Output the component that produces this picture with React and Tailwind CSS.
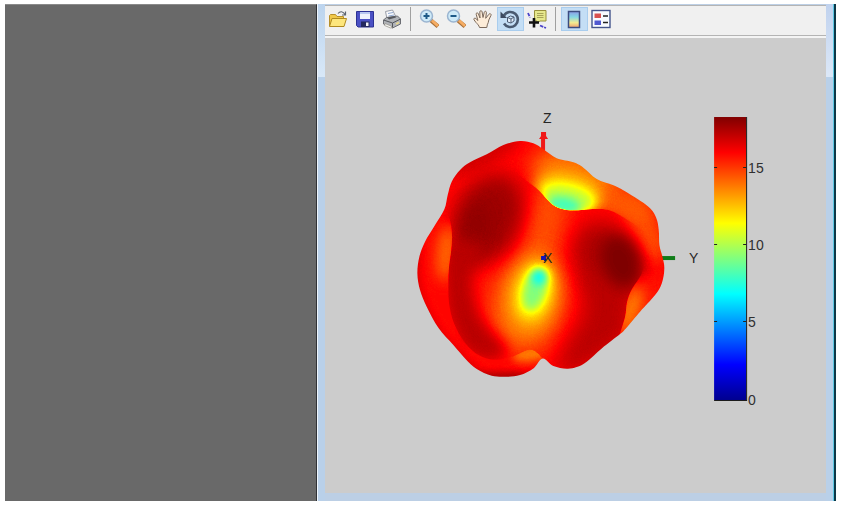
import React from 'react';

// Closed or open Catmull-Rom curve through a list of points
function smooth(points, closed = true) {
  const n = points.length;
  const at = (i) => (closed ? points[(i + n) % n] : points[Math.max(0, Math.min(n - 1, i))]);
  let d = `M${points[0][0]} ${points[0][1]}`;
  for (let i = 0; i < (closed ? n : n - 1); i++) {
    const [a, b, c, e] = [at(i - 1), at(i), at(i + 1), at(i + 2)];
    d += `C${b[0] + (c[0] - a[0]) / 6} ${b[1] + (c[1] - a[1]) / 6} ${c[0] - (e[0] - b[0]) / 6} ${c[1] - (e[1] - b[1]) / 6} ${c[0]} ${c[1]}`;
  }
  return closed ? d + 'Z' : d;
}

const outline = [
  [330, 33], [370, 40], [400, 58], [440, 85], [490, 97], [520, 113], [560, 147], [610, 166], [650, 187],
  [715, 230], [738, 262], [746, 300], [748, 345], [757, 380], [763, 415], [755, 460], [735, 495], [690, 545],
  [650, 592], [630, 612], [575, 655], [530, 695], [500, 711], [470, 716], [430, 708], [398, 685], [370, 715],
  [330, 735], [290, 740], [245, 737], [200, 717], [165, 685], [130, 645], [85, 593], [50, 530], [30, 480],
  [22, 430], [28, 380], [45, 335], [75, 285], [103, 238], [113, 195], [125, 155], [150, 120], [180, 97],
  [230, 73], [280, 45],
];
const leftRidge = [
  [104, 215], [121, 275], [126, 320], [123, 365], [117, 410], [115, 460], [117, 520], [132, 580], [165, 638],
  [205, 675], [250, 689], [300, 682], [355, 659], [380, 667], [400, 688],
];
const rightRidge = [[702, 385], [695, 430], [665, 478], [651, 515], [645, 560], [628, 616]];
const topRidge = [[280, 95], [340, 145], [385, 180], [410, 207], [435, 229], [470, 240], [520, 240], [552, 237], [610, 245], [700, 300]];

const gray = (v) => {
  const g = Math.round(v * 255);
  return `rgb(${g},${g},${g})`;
};

// One soft spot of the scalar field, v is the normalised value
function Spot({ x, y, rx, ry, r = 0, v, o = 1, blur = 'b20' }) {
  return (
    <ellipse cx={x} cy={y} rx={rx} ry={ry} transform={`rotate(${r} ${x} ${y})`} fill={gray(v)} opacity={o} filter={`url(#${blur})`} />
  );
}

const ticks = [
  { label: '15', y: 168 },
  { label: '10', y: 245 },
  { label: '5', y: 322 },
  { label: '0', y: 400 },
];

function Surface() {
  return (
    <g transform="translate(410 130) scale(0.33333)">
      <g clipPath="url(#body)">
        <g filter="url(#jet)">
          <rect width="780" height="765" fill={gray(0.87)} />
          {/* front lobes */}
          <Spot x={400} y={300} rx={60} ry={160} r={14} v={0.8} blur="b30" />
          <Spot x={700} y={290} rx={45} ry={110} r={-25} v={0.8} blur="b20" />
          <Spot x={345} y={530} rx={100} ry={140} r={4} v={0.76} blur="b40" />
          <Spot x={220} y={75} rx={130} ry={30} r={-27} v={0.92} blur="b20" />
          <Spot x={235} y={265} rx={100} ry={140} r={22} v={0.97} blur="b30" />
          <Spot x={195} y={295} rx={40} ry={90} r={10} v={0.985} blur="b30" />
          <path d={smooth([[115, 350], [220, 350], [185, 450], [210, 560], [290, 660], [240, 690], [160, 650], [110, 520]])} fill={gray(0.94)} filter="url(#b20)" />
          <Spot x={590} y={390} rx={95} ry={120} r={-25} v={0.955} blur="b30" />
          <path d={smooth([[540, 420], [680, 420], [660, 520], [650, 620], [500, 725], [440, 730], [470, 640], [520, 550]])} fill={gray(0.94)} filter="url(#b30)" />
          <Spot x={632} y={395} rx={58} ry={80} r={-20} v={1} blur="b20" />
          {/* front dip */}
          <Spot x={372} y={490} rx={72} ry={115} r={12} v={0.7} blur="b30" />
          <Spot x={372} y={485} rx={46} ry={80} r={16} v={0.6} blur="b20" />
          <Spot x={374} y={478} rx={30} ry={62} r={16} v={0.5} blur="b12" />
          <Spot x={387} y={442} rx={20} ry={22} r={20} v={0.36} blur="b12" />
          {/* upper dip */}
          <g clipPath="url(#top)">
            <Spot x={500} y={145} rx={140} ry={75} r={20} v={0.75} blur="b30" />
            <Spot x={640} y={225} rx={90} ry={40} r={25} v={0.79} blur="b20" />
            <Spot x={475} y={190} rx={100} ry={48} r={14} v={0.64} blur="b20" />
            <Spot x={475} y={205} rx={78} ry={36} r={14} v={0.57} blur="b12" />
            <Spot x={462} y={225} rx={50} ry={25} r={10} v={0.44} blur="b12" />
          </g>
          {/* lobe behind, left and bottom */}
          <g clipPath="url(#left)">
            <path d="M0 275H160V765H0zM100 640H420V765H100z" fill={gray(0.87)} filter="url(#b12)" />
            <path d={smooth([[20, 340], [20, 480], [90, 620], [220, 740], [330, 745]], false)} fill="none" stroke={gray(0.91)} strokeWidth="30" filter="url(#b12)" />
            <Spot x={285} y={748} rx={120} ry={20} v={0.96} blur="b12" />
            <Spot x={108} y={370} rx={28} ry={85} r={5} v={0.77} blur="b20" />
            <Spot x={365} y={670} rx={60} ry={24} r={-10} v={0.75} blur="b12" />
          </g>
          {/* lobe behind, right */}
          <g clipPath="url(#right)">
            <path d="M600 440H780V700H600z" fill={gray(0.86)} filter="url(#b20)" />
            <Spot x={662} y={540} rx={26} ry={75} r={20} v={0.74} blur="b20" />
          </g>
        </g>
      </g>
    </g>
  );
}

function Plot() {
  return (
    <svg viewBox="325 38 501 455" className="block w-full bg-[#cccccc]" role="img" aria-label="Radiation pattern">
      <defs>
        <filter id="jet" x="0" y="0" width="100%" height="100%" colorInterpolationFilters="sRGB">
          <feComponentTransfer>
            <feFuncR type="table" tableValues="0 0 0 0 0.5 1 1 1 0.5" />
            <feFuncG type="table" tableValues="0 0 0.5 1 1 1 0.5 0 0" />
            <feFuncB type="table" tableValues="0.5 1 1 1 0.5 0 0 0 0" />
          </feComponentTransfer>
        </filter>
        {[12, 20, 30, 40].map((s) => (
          <filter key={s} id={`b${s}`} x="-300%" y="-300%" width="700%" height="700%" colorInterpolationFilters="sRGB">
            <feGaussianBlur stdDeviation={s} />
          </filter>
        ))}
        <clipPath id="body"><path d={smooth(outline)} /></clipPath>
        <clipPath id="top"><path d={smooth(topRidge, false) + 'L780 300V0H280Z'} /></clipPath>
        <clipPath id="left"><path d={smooth(leftRidge, false) + 'V765H0V215Z'} /></clipPath>
        <clipPath id="right"><path d={smooth(rightRidge, false) + 'H780V385Z'} /></clipPath>
        <linearGradient id="scale" x1="0" y1="0" x2="0" y2="1">
          <stop offset="0" stopColor="#800000" />
          <stop offset="0.125" stopColor="#ff0000" />
          <stop offset="0.375" stopColor="#ffff00" />
          <stop offset="0.625" stopColor="#00ffff" />
          <stop offset="0.875" stopColor="#0000ff" />
          <stop offset="1" stopColor="#00008f" />
        </linearGradient>
      </defs>

      {/* axes */}
      <path d="M543 152V133" stroke="#f01818" strokeWidth="4" />
      <path d="M541 132h5v4l2 3h-9l2-3z" fill="#f01818" />
      <path d="M660 258h15" stroke="#107c18" strokeWidth="4" />
      <Surface />
      <path d="M541 256h3v-1h2v6h-2v-1h-3z" fill="#1414b4" />

      <g fontFamily="'Liberation Sans', Arial, sans-serif" fontSize="14" fill="#262626">
        <text x="543" y="123">Z</text>
        <text x="689" y="263">Y</text>
        <text x="543" y="263">X</text>
      </g>

      {/* colour scale */}
      <rect x="714" y="117" width="32" height="283" fill="url(#scale)" />
      <path d="M746.5 117V400.500H714" fill="none" stroke="#1c1c1c" />
      {ticks.map((t) => (
        <g key={t.label}>
          {t.label !== '0' && <path d={`M714 ${t.y - 0.5}h3M743 ${t.y - 0.5}h3`} stroke="#222" />}
          <text x="748" y={t.y + 5} fontFamily="'Liberation Sans', Arial, sans-serif" fontSize="14" fill="#303030">{t.label}</text>
        </g>
      ))}
    </svg>
  );
}

const icons = {
  open: (
    <>
      <path d="M1.500 17V6.500l1-1h5l1.500 2h6.500V17z" fill="#f0c84a" stroke="#b8902a" />
      <path d="M1.500 17.500L4 9.500h14.500l-2.500 8z" fill="#fde67c" stroke="#b08a20" />
      <path d="M10 4.500c2-2.500 5-2.500 7 1M17.500 2.500v3.500h-3.500" fill="none" stroke="#5c6470" strokeWidth="1.200" />
    </>
  ),
  save: (
    <>
      <path d="M1.500 2.500h17v15.500H3l-1.500-1.500z" fill="#4a50c4" stroke="#2c3294" />
      <path d="M5 3h10v7H5z" fill="#eef2fc" />
      <path d="M5 3h10v2H5z" fill="#b8c8f0" />
      <path d="M6 12.500h8.500V18H6z" fill="#23285e" />
      <path d="M11 13.500h2.500V17H11z" fill="#f4f4fa" />
    </>
  ),
  print: (
    <>
      <path d="M5 10L3.500 2.500l7-1.500 4 8z" fill="#f8f9fc" stroke="#9a9ea8" />
      <path d="M6 4.500l5-1M6.500 7l5.500-1" stroke="#8fa8d0" />
      <path d="M1.500 11l3-2.500 11-1.500 3 3v5l-8 4-9-4z" fill="#b0b3b8" stroke="#6c6e74" />
      <path d="M1.500 11l9 3 8-4M10.500 14v5" fill="none" stroke="#54575c" />
      <path d="M5 8.500l2 2 7-2-1-1.500z" fill="#55585e" />
      <path d="M3 14.500l6 2.500 1.500 1.500-2 .5-6-2.500z" fill="#f2f2ee" stroke="#88857c" strokeWidth=".6" />
      <path d="M14 15l3-1.500" stroke="#e8d890" strokeWidth="1.500" />
    </>
  ),
  zoomIn: (
    <>
      <path d="M12 11.500l7 6" stroke="#a8713c" strokeWidth="4.200" />
      <path d="M13 11.500l6 5.500" stroke="#f6ac62" strokeWidth="2.800" />
      <circle cx="7.500" cy="7" r="6" fill="#cfeaf8" stroke="#9ab4d0" strokeWidth="1.500" />
      <path d="M4.500 7h6M7.500 4v6" stroke="#1f5a88" strokeWidth="2" />
    </>
  ),
  zoomOut: (
    <>
      <path d="M12 11.500l7 6" stroke="#a8713c" strokeWidth="4.200" />
      <path d="M13 11.500l6 5.500" stroke="#f6ac62" strokeWidth="2.800" />
      <circle cx="7.500" cy="7" r="6" fill="#cfeaf8" stroke="#9ab4d0" strokeWidth="1.500" />
      <path d="M4.500 7h6" stroke="#1f5a88" strokeWidth="2" />
    </>
  ),
  pan: (
    <path
      d="M6.500 18.500c-.5-2-2-3.500-3.500-5L1 10.800c-.7-1.300.8-2.300 1.900-1.200l2 1.900L3.200 5.300c-.3-1.600 1.500-2.100 2.100-.6L7 9 6.800 3c0-1.700 2-1.800 2.300-.2L10 8.500l1.300-5.300c.5-1.500 2.300-1.100 2.100.5l-.7 5.600 3.200-4c.9-1.300 2.700-.4 2.100 1L15.800 11c-.5 2-.6 3.500-1.500 4.800l-.5 2.700z"
      fill="#fdecd8"
      stroke="#7c6a5c"
    />
  ),
  rotate: (
    <>
      <path d="M4 6.500a7.500 7.500 0 1 1 0 8" fill="none" stroke="#4a5a70" strokeWidth="2.600" />
      <path d="M.5 2.500v6.500h6.500z" fill="#3c4a60" />
      <path d="M7.500 8.500l3-1.500 3.500 1v4l-3 2-3.500-1zM7.500 8.500l3.500 1.500 3-2M11 10v4" fill="#e4eefa" stroke="#4c5c74" />
    </>
  ),
  cursor: (
    <>
      <path d="M1 4l2 4.500M13 16.500l6 2.500" fill="none" stroke="#4a42c8" strokeWidth="1.800" strokeDasharray="3.500 1" />
      <path d="M7.500 1.500h11.500v10.500H13l-3 2v-2H7.500z" fill="#e6e88c" stroke="#98903c" />
      <path d="M10 4.500h6.500M10 6.500h6.500M10 8.500h6.500" stroke="#a8a458" />
      <path d="M2 13.500h10M7 9v9.500" stroke="#111" strokeWidth="2.600" />
    </>
  ),
  colorbar: (
    <>
      <rect x="4.500" y="2.500" width="11" height="16" fill="url(#mini)" stroke="#3c4c80" strokeWidth="1.500" />
      <defs>
        <linearGradient id="mini" x1="0" y1="0" x2="0" y2="1">
          <stop offset="0" stopColor="#8c9ce8" />
          <stop offset=".35" stopColor="#84d8e4" />
          <stop offset=".7" stopColor="#f4ec90" />
          <stop offset="1" stopColor="#f0a070" />
        </linearGradient>
      </defs>
    </>
  ),
  legend: (
    <>
      <rect x="1" y="1.500" width="18" height="17" fill="#f8faff" stroke="#44548c" strokeWidth="1.400" />
      <path d="M3.500 4.500h6.500V9H3.500z" fill="#d85050" />
      <path d="M3.500 11.500h6.500V16H3.500z" fill="#5058d0" />
      <path d="M12 7h5M12 13.500h5" stroke="#222" strokeWidth="1.500" />
    </>
  ),
};

const tools = [
  { icon: 'open', name: 'Open File' },
  { icon: 'save', name: 'Save Figure' },
  { icon: 'print', name: 'Print Figure' },
  null,
  { icon: 'zoomIn', name: 'Zoom In' },
  { icon: 'zoomOut', name: 'Zoom Out' },
  { icon: 'pan', name: 'Pan' },
  { icon: 'rotate', name: 'Rotate 3D', active: true },
  { icon: 'cursor', name: 'Data Cursor' },
  null,
  { icon: 'colorbar', name: 'Insert Colorbar', active: true },
  { icon: 'legend', name: 'Insert Legend' },
];

function Toolbar() {
  return (
    <div className="flex items-center border-y border-[#b4b4b4] bg-[#f0f0f0] pt-px pb-1">
      {tools.map((tool, idx) =>
        tool ? (
          <button
            key={idx}
            aria-label={tool.name}
            aria-pressed={tool.active}
            className={`flex h-6 w-[27px] items-center justify-center ${tool.active ? 'border border-[#a9cdee] bg-[#c4def5]' : ''}`}
          >
            <svg viewBox="0 0 20 20" className="size-5 shrink-0" aria-hidden="true">{icons[tool.icon]}</svg>
          </button>
        ) : (
          <div key={idx} className="flex w-[10px] justify-center">
            <div className="h-6 w-px bg-[#a0a0a0]" />
          </div>
        )
      )}
    </div>
  );
}

export default function App() {
  return (
    <main className="flex min-h-screen bg-white px-[5px] py-1">
      {/* desktop behind the window */}
      <div className="flex-[312] border-t border-r border-t-[#8a8a8a] border-r-[#303236] bg-[#696969]" />

      {/* figure window */}
      <section className="flex flex-[519] border-r-2 border-[#0c3848]">
        <div className="flex w-2 shrink-0 flex-col border-l border-[#eef4fa] bg-[#b9d0e9]">
          <div className="h-[73px] bg-linear-to-b from-[#bcd4ee] to-[#d8e8f8]" />
        </div>
        <div className="flex min-w-0 flex-1 flex-col bg-[#bccfe5] pt-px">
          <Toolbar />
          <div className="border-t-2 border-[#f4f4f4]">
            <Plot />
          </div>
        </div>
        <div className="flex w-2 shrink-0 flex-col border-r border-[#5cc8e4] bg-[#b9d0e9]">
          <div className="h-[73px] bg-linear-to-b from-[#c0d2ee] to-[#dce8f8]" />
        </div>
      </section>
    </main>
  );
}
